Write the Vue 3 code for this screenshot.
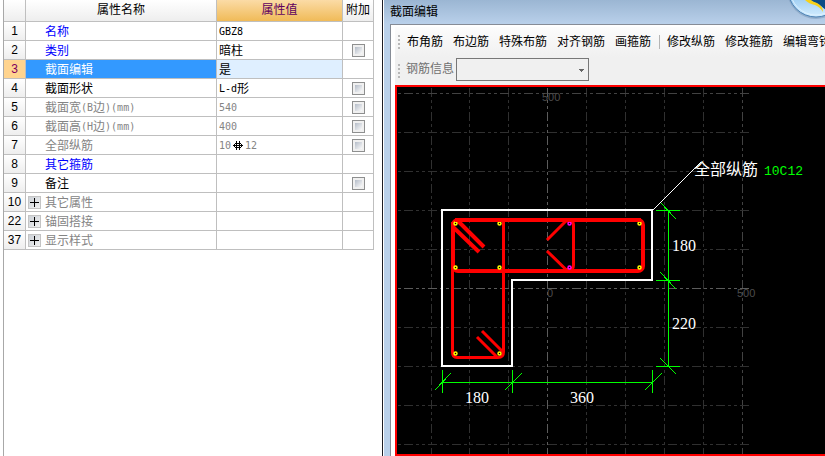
<script setup>
import { ref } from 'vue'

const rows = ref([
  { no: 1, name: '名称', value: 'GBZ8', tone: 'blue' },
  { no: 2, name: '类别', value: '暗柱', tone: 'blue', extra: true },
  { no: 3, name: '截面编辑', value: '是', tone: 'selected' },
  { no: 4, name: '截面形状', value: 'L-d形', tone: 'black', extra: true },
  { no: 5, name: '截面宽(B边)(mm)', value: '540', tone: 'grey', extra: true },
  { no: 6, name: '截面高(H边)(mm)', value: '400', tone: 'grey', extra: true },
  { no: 7, name: '全部纵筋', value: '10', count: '12', tone: 'grey', extra: true },
  { no: 8, name: '其它箍筋', value: '', tone: 'blue' },
  { no: 9, name: '备注', value: '', tone: 'black', extra: true },
  { no: 10, name: '其它属性', value: '', tone: 'grey', group: true },
  { no: 22, name: '锚固搭接', value: '', tone: 'grey', group: true },
  { no: 37, name: '显示样式', value: '', tone: 'grey', group: true },
])

// Splits mixed text so that half-width characters get the monospaced face.
function runs(text) {
  return (text.match(/[\x20-\x7e]+|[^\x20-\x7e]+/g) || []).map((t) => ({
    t,
    latin: /^[\x20-\x7e]/.test(t),
  }))
}

const tools = ['布角筋', '布边筋', '特殊布筋', '对齐钢筋', '画箍筋', '|', '修改纵筋', '修改箍筋', '编辑弯钩']

const gridX = [431, 469, 508, 547, 586, 625, 664, 703, 742]
const gridY = [93, 132, 171, 210, 249, 288, 327, 366, 405, 444]
const bars = [
  [455, 223], [499, 223], [455, 267], [499, 267],
  [639, 223], [639, 267], [455, 353], [499, 353],
]
const tieBars = [[569, 223], [569, 267]]
</script>

<template>
  <div class="app">
    <section class="props">
      <table>
        <colgroup>
          <col class="c-no" /><col class="c-name" /><col class="c-value" /><col class="c-extra" />
        </colgroup>
        <thead>
          <tr>
            <th></th>
            <th>属性名称</th>
            <th class="active">属性值</th>
            <th>附加</th>
          </tr>
        </thead>
        <tbody>
          <tr v-for="r in rows" :key="r.no" :class="r.tone">
            <th scope="row">{{ r.no }}</th>
            <td class="name">
              <div class="cell">
                <button v-if="r.group" type="button" class="expand" :aria-label="'展开' + r.name">
                  <svg width="13" height="13" viewBox="0 0 13 13" shape-rendering="crispEdges">
                    <path d="M2 6h9v1H2zM6 2h1v9H6z" fill="#000" />
                  </svg>
                </button>
                <span v-for="(s, i) in runs(r.name)" :key="i" :class="{ latin: s.latin }">{{ s.t }}</span>
              </div>
            </td>
            <td class="value">
              <div class="cell">
                <span v-for="(s, i) in runs(r.value)" :key="i" :class="{ latin: s.latin }">{{ s.t }}</span>
                <template v-if="r.count">
                  <svg class="grade" width="10" height="10" viewBox="0 0 10 10" shape-rendering="crispEdges">
                    <path d="M3 0h1v9H3zM6 0h1v9H6zM2 2h6v1H2zM1 3h1v3H1zM8 3h1v3H8zM2 6h6v1H2zM0 4h10v1H0z" fill="#000" />
                  </svg>
                  <span class="latin">{{ r.count }}</span>
                </template>
              </div>
            </td>
            <td class="extra">
              <input v-if="r.extra" type="checkbox" :aria-label="r.name + '附加'" />
            </td>
          </tr>
        </tbody>
      </table>
    </section>

    <section class="editor">
      <header class="title">截面编辑</header>
      <svg class="orb" width="42" height="22" viewBox="0 0 42 22">
        <defs>
          <linearGradient id="orbFill" x1="0" y1="0" x2="0" y2="1">
            <stop offset="0.55" stop-color="#8ec4ee" />
            <stop offset="1" stop-color="#d3edff" />
          </linearGradient>
        </defs>
        <circle cx="32" cy="-10" r="29" fill="#7f9dbd" opacity="0.6" />
        <circle cx="32" cy="-11" r="28" fill="url(#orbFill)" stroke="#4d83b5" />
        <circle cx="32" cy="-11" r="26" fill="none" stroke="#dcf1ff" />
        <path d="M25 0Q34 3 42 10V0Z" fill="#0b4d86" />
        <path d="M21 0Q25 4 31 5Q36 7 39 12Q39 6 33 3Q29 2 27 0Z" fill="#f7d117" />
      </svg>
      <div class="frame">
        <nav class="bar">
          <i class="grip"></i>
          <template v-for="t in tools" :key="t">
            <i v-if="t === '|'" class="sep"></i>
            <button v-else type="button" class="tool">{{ t }}</button>
          </template>
        </nav>
        <div class="bar second">
          <i class="grip"></i>
          <label for="rebar">钢筋信息</label>
          <select id="rebar"></select>
        </div>
        <div class="canvas">
          <svg class="scene" width="100%" height="100%">
            <g transform="translate(-397 -87)">
              <g shape-rendering="crispEdges" fill="none">
                <g class="grid">
                  <line v-for="x in gridX" :key="'x' + x" :x1="x + 0.5" :x2="x + 0.5" y1="88" y2="454"
                    :class="{ axis: x === 547, edge: x === 742 }" />
                  <line v-for="y in gridY" :key="'y' + y" x1="380" x2="749" :y1="y + 0.5" :y2="y + 0.5"
                    :class="{ axis: y === 288, edge: y === 93 }" />
                </g>
                <path d="M442 210H652V280H512V366H442Z" stroke="#fff" stroke-width="2" />
              </g>
              <g class="scale">
                <text x="542" y="101">500</text>
                <text x="547" y="297">0</text>
                <text x="737" y="297">500</text>
              </g>
              <g fill="none" stroke="#f00">
                <rect x="453" y="220" width="190" height="51" rx="5" stroke-width="4" />
                <path d="M452.5 222V352Q452.5 357.5 457 357.5H498Q503.5 357.5 503.5 352V222" stroke-width="3" />
                <path d="M457 220L484 247M453 227L479 252" stroke-width="4" />
                <path d="M482 331L503 352M477 337L497 357" stroke-width="3" />
                <path d="M547 240L566 221H569Q573.5 221 573.5 225V265Q573.5 269.5 569 269.5H566L547 251" stroke-width="3" />
              </g>
              <g fill="#000" stroke-width="1.5">
                <circle v-for="(b, i) in bars" :key="'b' + i" :cx="b[0] + 0.5" :cy="b[1] + 0.5" r="1.5" stroke="#ff0" />
                <circle v-for="(b, i) in tieBars" :key="'t' + i" :cx="b[0] + 0.5" :cy="b[1] + 0.5" r="1.5" stroke="#f0f" />
              </g>
              <path d="M455 220H641" stroke="#f00" stroke-width="4" />
              <g fill="none" stroke="#0f0" shape-rendering="crispEdges">
                <path d="M668.5 210V366M656 210.5H680M656 280.5H680M656 366.5H680" />
                <path d="M660 202L676 219M660 272L676 289M660 358L676 374" />
                <path d="M442 382.5H652M442.5 370V393M512.5 370V393M652.5 370V393" />
                <path d="M435 390L451 373M505 390L522 373M645 390L662 373" />
              </g>
              <path d="M653 210L701 162" stroke="#fff" fill="none" shape-rendering="crispEdges" />
              <g class="dims">
                <text x="672" y="251">180</text>
                <text x="672" y="329">220</text>
                <text x="465" y="403">180</text>
                <text x="570" y="403">360</text>
                <text x="694" y="175">全部纵筋</text>
                <text class="spec" x="764" y="175">10C12</text>
              </g>
            </g>
          </svg>
        </div>
      </div>
    </section>
  </div>
</template>

<style>
body {
  background: #fff;
}
</style>

<style scoped>
.app {
  display: flex;
  min-height: 100vh;
  overflow: hidden;
  font: 12px/18px "Liberation Sans", "Noto Sans CJK SC", sans-serif;
  color: #000;
}
.props {
  flex: none;
  margin-left: 3px;
  padding-right: 8px;
  border-left: 1px solid #a8a8a8;
  border-right: 1px solid #1c1c24;
}
table {
  table-layout: fixed;
  width: 370px;
  border-collapse: separate;
  border-spacing: 0;
}
.c-no { width: 22px; }
.c-name { width: 191px; }
.c-value { width: 126px; }
.c-extra { width: 31px; }
th,
td {
  height: 18px;
  padding: 0;
  border-right: 1px solid #bfbfbf;
  border-bottom: 1px solid #bfbfbf;
  font-weight: 400;
  line-height: 18px;
  white-space: nowrap;
}
th {
  background: linear-gradient(#fff, #eee);
}
thead th {
  height: 21px;
  line-height: 21px;
}
thead .active {
  background: linear-gradient(#fbdba6, #f0bb58);
  color: #600060;
}
.cell {
  display: flex;
  align-items: center;
  box-sizing: border-box;
  height: 18px;
  padding-top: 2px;
}
.name .cell {
  position: relative;
  padding-left: 19px;
}
.value .cell {
  padding-left: 2px;
}
.latin {
  font-family: "DejaVu Sans Mono", monospace;
  font-size: 10px;
}
.blue .name { color: #00f; }
.grey .name,
.grey .value { color: #848484; }
.selected .name {
  background: #39f;
  color: #fff;
}
.selected .value { background: #dfefff; }
.selected th {
  background: #ffd48f;
  color: #800060;
}
.grade {
  margin: 0 2px;
}
.extra {
  text-align: center;
}
.extra input {
  appearance: none;
  display: block;
  width: 13px;
  height: 13px;
  margin: 0 auto;
  border: 1px solid #8e8f8f;
  background: linear-gradient(135deg, #b4bcc8, #fafafa) content-box, #f0f0f0;
  padding: 2px;
  box-sizing: border-box;
}
.expand {
  position: absolute;
  left: 2px;
  top: 3px;
  width: 13px;
  height: 13px;
  padding: 0;
  border: 0;
  outline: 1px solid #c4c4c4;
  outline-offset: -1px;
  background: linear-gradient(135deg, #c9ced4, #f4f4f4);
}
.expand svg {
  display: block;
}
.editor {
  position: relative;
  flex: 1;
  min-width: 0;
  display: flex;
  flex-direction: column;
  margin-left: 1px;
  padding-left: 6px;
  background: linear-gradient(#9bb6d3, #b9d0ea 24px);
}
.title {
  height: 24px;
  line-height: 24px;
}
.orb {
  position: absolute;
  top: 0;
  right: -1px;
}
.frame {
  flex: 1;
  display: flex;
  flex-direction: column;
  padding-left: 4px;
  border-top: 1px solid #868c96;
  border-left: 1px solid #868c96;
  background: #fff;
}
.bar {
  display: flex;
  align-items: center;
  height: 30px;
  margin-top: 2px;
  overflow: hidden;
  padding-left: 3px;
  background: linear-gradient(#fcfcfc, #f0f0f0);
}
.second {
  height: 28px;
  margin-top: 0;
  background: #f0f0f0;
}
.grip {
  flex: none;
  width: 2px;
  height: 14px;
  margin-right: 2px;
  background: repeating-linear-gradient(#b8b8b8 0 2px, transparent 2px 4px);
}
.tool {
  flex: none;
  padding: 0 5px;
  border: 0;
  background: none;
  font: inherit;
  color: #000;
}
.sep {
  flex: none;
  width: 1px;
  height: 14px;
  margin: 0 2px 0 3px;
  background: #b5b5b5;
}
.second label {
  padding: 0 2px 4px 4px;
  color: #707070;
}
.second select {
  appearance: none;
  width: 133px;
  height: 23px;
  margin-bottom: 4px;
  border: 1px solid #777;
  border-radius: 0;
  background-color: #f0f0f0;
  background-image: linear-gradient(#666, #666), linear-gradient(#666, #666), linear-gradient(#666, #666);
  background-repeat: no-repeat;
  background-size: 5px 1px, 3px 1px, 1px 1px;
  background-position: right 4px top 10px, right 5px top 11px, right 6px top 12px;
}
.canvas {
  flex: 1;
  display: flex;
  border: 2px solid #f00;
  border-right: 0;
  background: #000;
  overflow: hidden;
}
.scene {
  display: block;
  flex: 1;
}
.grid line {
  stroke: #303030;
  stroke-dasharray: 9 3 3 3 3 3;
}
.grid .edge { stroke: #424242; }
.grid .axis { stroke: #5c5c5c; }
.scale text {
  font: 11px "Liberation Sans", sans-serif;
  fill: #4c4c4c;
}
.dims text {
  font: 16px "Liberation Serif", "Noto Sans CJK SC", serif;
  fill: #fff;
}
.dims .spec {
  font: 13px "Liberation Mono", monospace;
  fill: #0f0;
}
</style>
